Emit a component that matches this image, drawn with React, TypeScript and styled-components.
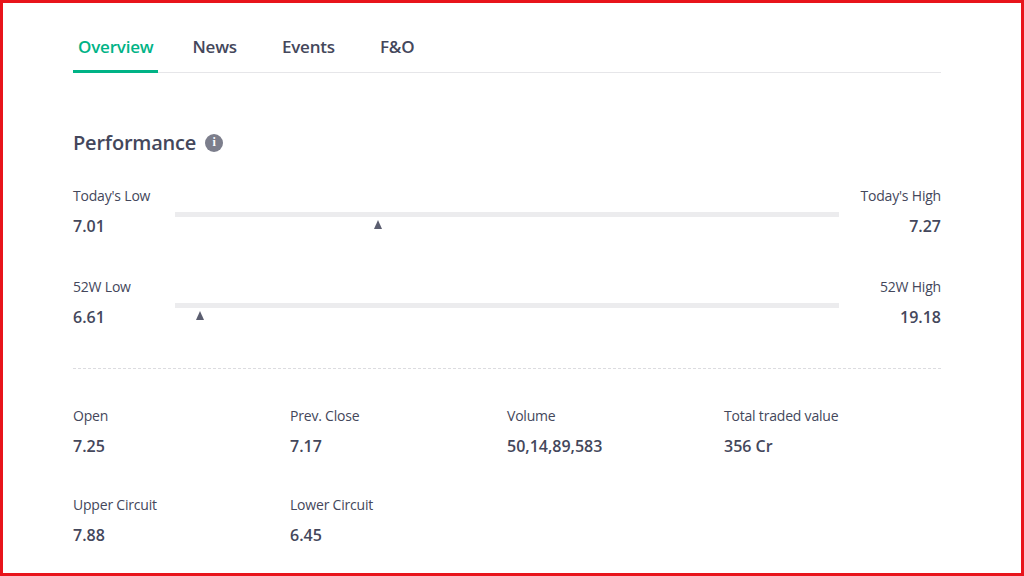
import React from "react";
import styled, { createGlobalStyle } from "styled-components";

const Global = createGlobalStyle`
  html, body { margin: 0; padding: 0; background: #fff; }
  body { font-family: "Open Sans", "Noto Sans", sans-serif; color: #44475b; }
`;

const Frame = styled.div`
  width: 1024px; height: 576px; box-sizing: border-box;
  border: 3px solid #e8141b; background: #fff;
  padding: 0 80px 0 70px;
`;
const Tabs = styled.div`
  display: flex; gap: 0; border-bottom: 1px solid #e6e6e9; height: 69px; align-items: flex-end;
`;
const Tab = styled.div<{ $active?: boolean }>`
  font-size: 17px; font-weight: 600; padding: 0 5px 12px; margin-right: ${p => p.$active ? 29 : 35}px;
  color: ${p => p.$active ? "#00b386" : "#44475b"};
  border-bottom: 3px solid ${p => p.$active ? "#00b386" : "transparent"};
  margin-bottom: -1px; letter-spacing: -0.2px;
`;
const Title = styled.div`
  display: flex; align-items: center; gap: 9px; margin-top: 56px;
  font-size: 20px; font-weight: 600; letter-spacing: -0.2px;
`;
const Info = styled.span`
  width: 18px; height: 18px; border-radius: 50%; background: #7c7e8c; color: #fff;
  display: inline-flex; align-items: center; justify-content: center; font-size: 12px; font-weight: 700;
  font-family: "Liberation Serif", serif;
`;
const RangeRow = styled.div`
  display: grid; grid-template-columns: 102px 1fr 102px; margin-top: ${p => (p as any).$mt}px;
`;
const Side = styled.div<{ $right?: boolean }>`
  display: flex; flex-direction: column; gap: 9px; text-align: ${p => p.$right ? "right" : "left"};
`;
const Label = styled.div`font-size: 14px; color: #44475b; line-height: 20px; letter-spacing: -0.2px;`;
const Value = styled.div`font-size: 16px; font-weight: 600; color: #44475b; line-height: 22px;`;
const Track = styled.div`
  position: relative; height: 5px; background: #ececee; margin-top: 26px;
`;
const Marker = styled.div`
  position: absolute; top: 8px; width: 0; height: 0;
  border-left: 4.5px solid transparent; border-right: 4.5px solid transparent; border-bottom: 9px solid #5b5e70;
  transform: translateX(-50%);
`;
const Dashed = styled.div`border-top: 1px dashed #dcdce0; margin-top: 40px;`;
const Stats = styled.div`
  display: grid; grid-template-columns: repeat(4, 217px); row-gap: 38px; margin-top: 37px;
`;
const Stat = styled.div`display: flex; flex-direction: column; gap: 9px;`;

const ranges = [
  { l: "Today's Low", lv: "7.01", h: "Today's High", hv: "7.27", pos: 30.6, mt: 30 },
  { l: "52W Low", lv: "6.61", h: "52W High", hv: "19.18", pos: 3.8, mt: 40 },
];
const stats = [
  ["Open", "7.25"], ["Prev. Close", "7.17"], ["Volume", "50,14,89,583"], ["Total traded value", "356 Cr"],
  ["Upper Circuit", "7.88"], ["Lower Circuit", "6.45"],
];

export default function App() {
  return (
    <Frame>
      <Global />
      <Tabs>
        <Tab $active>Overview</Tab><Tab>News</Tab><Tab>Events</Tab><Tab>F&amp;O</Tab>
      </Tabs>
      <Title>Performance <Info>i</Info></Title>
      {ranges.map(r => (
        <RangeRow key={r.l} style={{ marginTop: r.mt }}>
          <Side><Label>{r.l}</Label><Value>{r.lv}</Value></Side>
          <div><Track><Marker style={{ left: `${r.pos}%` }} /></Track></div>
          <Side $right><Label>{r.h}</Label><Value>{r.hv}</Value></Side>
        </RangeRow>
      ))}
      <Dashed />
      <Stats>
        {stats.map(([k, v]) => (
          <Stat key={k}><Label>{k}</Label><Value>{v}</Value></Stat>
        ))}
      </Stats>
    </Frame>
  );
}
